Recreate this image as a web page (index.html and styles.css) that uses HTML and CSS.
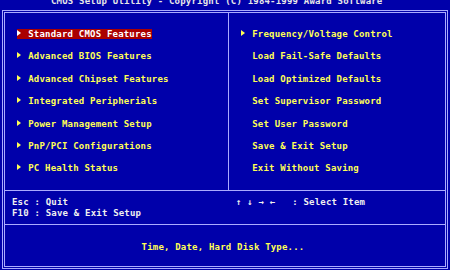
FILE: index.html
```html
<!DOCTYPE html>
<html lang="en">
<head>
  <meta charset="UTF-8" />
  <title>CMOS Setup Utility</title>
  <link rel="stylesheet" href="styles.css">
</head>
<body>

  <div class="title"><span>CMOS Setup Utility - Copyright (C) 1984-1999 Award Software</span></div>

  <div class="frame">
    <div class="panel">

      <!-- Main menu -->
      <div class="menu">
        <ul class="col col-left">
          <li><span class="item active"><i class="arrow"></i>Standard CMOS Features</span></li>
          <li><span class="item"><i class="arrow"></i>Advanced BIOS Features</span></li>
          <li><span class="item"><i class="arrow"></i>Advanced Chipset Features</span></li>
          <li><span class="item"><i class="arrow"></i>Integrated Peripherials</span></li>
          <li><span class="item"><i class="arrow"></i>Power Management Setup</span></li>
          <li><span class="item"><i class="arrow"></i>PnP/PCI Configurations</span></li>
          <li><span class="item"><i class="arrow"></i>PC Health Status</span></li>
        </ul>
        <ul class="col">
          <li><span class="item"><i class="arrow"></i>Frequency/Voltage Control</span></li>
          <li><span class="item"><i class="blank"></i>Load Fail-Safe Defaults</span></li>
          <li><span class="item"><i class="blank"></i>Load Optimized Defaults</span></li>
          <li><span class="item"><i class="blank"></i>Set Supervisor Password</span></li>
          <li><span class="item"><i class="blank"></i>Set User Password</span></li>
          <li><span class="item"><i class="blank"></i>Save &amp; Exit Setup</span></li>
          <li><span class="item"><i class="blank"></i>Exit Without Saving</span></li>
        </ul>
      </div>

      <!-- Key help -->
      <div class="keys">
        <div class="keys-col">Esc : Quit<br>F10 : Save &amp; Exit Setup</div>
        <div class="keys-col">↑ ↓ → ←   : Select Item</div>
      </div>

      <!-- Status line -->
      <div class="status">Time, Date, Hard Disk Type...</div>

    </div>
  </div>

</body>
</html>
```

FILE: styles.css
```css
* {
  box-sizing: border-box;
}

body {
  margin: 0;
  width: 450px;
  height: 270px;
  overflow: hidden;
  background: #0000aa;
  font-family: "DejaVu Sans Mono", monospace;
  font-size: 9px;
  font-weight: bold;
  letter-spacing: 0.2px;
  color: #ffff55;
}

/* Title bar (cut off at the top) */
.title {
  height: 10px;
  overflow: hidden;
  padding-left: 51px;
  color: #e8e8e8;
}

.title span {
  display: block;
  line-height: 10px;
  margin-top: -4px;
  white-space: pre;
}

/* Double frame */
.frame {
  margin: 0 2px;
  height: 259px;
  border: 1px solid #aaaaff;
  padding: 1px;
}

.panel {
  height: 100%;
  border: 1px solid #aaaaff;
}

/* Menu columns */
.menu {
  display: grid;
  grid-template-columns: 224px 1fr;
  height: 178px;
  border-bottom: 1px solid #aaaaff;
}

.col {
  margin: 0;
  padding: 16px 0 0 12px;
  list-style: none;
  display: flex;
  flex-direction: column;
  gap: 12.4px;
}

.col-left {
  border-right: 1px solid #aaaaff;
}

.item {
  display: inline-block;
  height: 10px;
  line-height: 10px;
  white-space: pre;
}

.item.active {
  background: #aa0000;
  color: #ffffff;
}

.arrow {
  display: inline-block;
  width: 0;
  height: 0;
  border-left: 4px solid currentColor;
  border-top: 3px solid transparent;
  border-bottom: 3px solid transparent;
  margin-right: 7.24px;
  vertical-align: 1px;
}

.blank {
  display: inline-block;
  width: 11.24px;
}

/* Key help */
.keys {
  display: grid;
  grid-template-columns: 224px 1fr;
  height: 34px;
  padding-top: 6px;
  border-bottom: 1px solid #aaaaff;
  color: #f0f0f0;
  line-height: 11.3px;
}

.keys-col {
  padding-left: 7px;
  white-space: pre;
}

/* Status line */
.status {
  height: 41px;
  padding: 17px 4px 0 0;
  text-align: center;
  line-height: 10px;
}
```
